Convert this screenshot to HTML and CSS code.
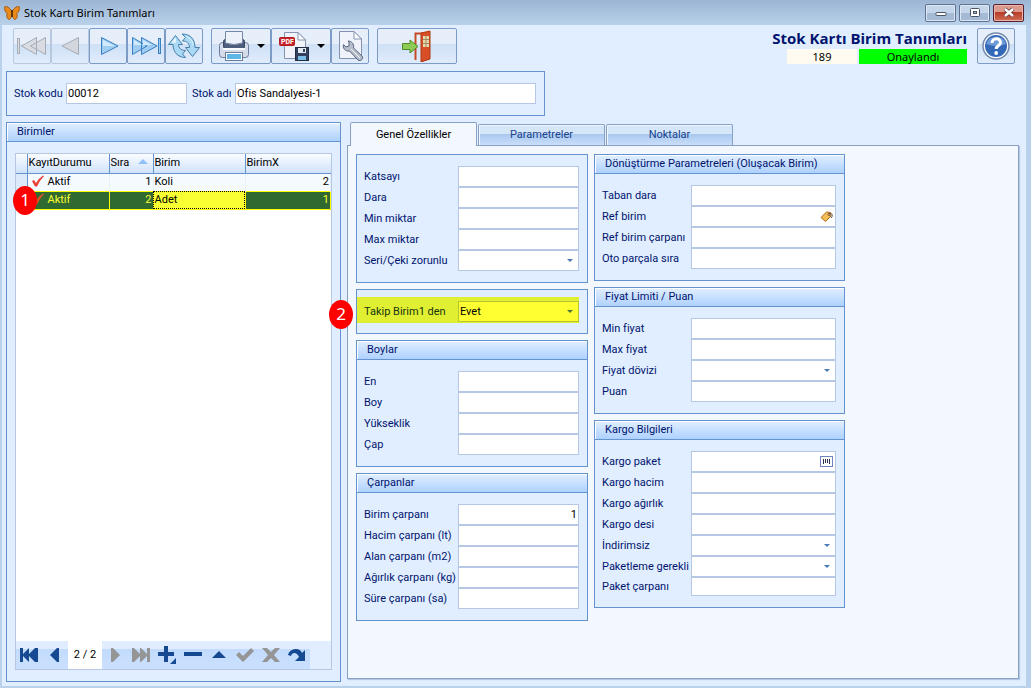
FILE: index.html
```html
<!DOCTYPE html>
<html lang="tr">
  <head>
    <meta charset="UTF-8" />
    <meta name="viewport" content="width=device-width, initial-scale=1.0" />
    <title>Stok Kartı Birim Tanımları</title>
    <link rel="stylesheet" href="styles.css">
  </head>
  <body>
    <header class="titlebar">
      <svg class="app-icon" width="16" height="16" viewBox="0 0 16 16">
        <path d="M8 7 C6 2 2 1 0.5 2 C0.5 5 1.5 8 3.5 8.5 C2 10 3 14 5 14.5 C7 14 7.5 11 8 9 C8.500 11 9 14 11 14.500 C13 14 14 10 12.500 8.500 C14.500 8 15.500 5 15.500 2 C14 1 10 2 8 7Z" fill="#e98a1a" stroke="#a8590f" />
        <path d="M2 3 L7 8 M14 3 L9 8 M5 13 L7 9 M11 13 L9 9" stroke="#e98a1a" stroke-width="2" />
        <path d="M8 5 V12" stroke="#3a1c08" stroke-width="1.500" />
      </svg>
      <span class="titlebar-text">Stok Kartı Birim Tanımları</span>
      <div class="window-buttons">
        <button class="window-btn" aria-label="Simge durumuna küçült">
          <svg width="12" height="12" viewBox="0 0 12 12"><rect x="1" y="5.500" width="10" height="3" rx="0.500" fill="#fff" stroke="#4a5565" /></svg>
        </button>
        <button class="window-btn" aria-label="Ekranı kapla">
          <svg width="12" height="12" viewBox="0 0 12 12"><rect x="1.500" y="1.500" width="9" height="8" rx="1" fill="#fff" stroke="#4a5565" /><rect x="4.500" y="4.500" width="3" height="2" fill="#a9bdd5" stroke="#4a5565" /></svg>
        </button>
        <button class="window-btn window-close" aria-label="Kapat">
          <svg width="12" height="12" viewBox="0 0 12 12"><path d="M2 2 L10 9 M10 2 L2 9" stroke="#5a3038" stroke-width="4" /><path d="M2 2 L10 9 M10 2 L2 9" stroke="#fff" stroke-width="2.500" /></svg>
        </button>
      </div>
    </header>

    <div class="content">
      <div class="toolbar">
        <div class="toolbar-group">
          <button class="tool-btn" disabled aria-label="İlk kayıt">
            <svg width="32" height="24" viewBox="0 0 32 24" fill="#d9dce2" stroke="#a7abb3">
              <rect x="1.500" y="4.500" width="2" height="15" /><path d="M20.500 3.500 V20.500 L5.500 12Z M29.500 3.500 V20.500 L14.500 12Z" />
            </svg>
          </button>
          <button class="tool-btn" disabled aria-label="Önceki kayıt">
            <svg width="32" height="24" viewBox="0 0 32 24" fill="#d3d6dc" stroke="#a7abb3"><path d="M24.500 3.500 V20.500 L8 12Z" /></svg>
          </button>
          <button class="tool-btn" aria-label="Sonraki kayıt">
            <svg width="32" height="24" viewBox="0 0 32 24" fill="#9fcdf2" stroke="#3b7fc0"><path d="M9.500 3.500 V20.500 L26 12Z" /><path d="M11 6 V12 H23Z" fill="#d2ebfc" stroke="none" /></svg>
          </button>
          <button class="tool-btn" aria-label="Son kayıt">
            <svg width="32" height="24" viewBox="0 0 32 24" fill="#9fcdf2" stroke="#3b7fc0">
              <path d="M2.500 3.500 V20.500 L17 12Z M11.500 3.500 V20.500 L27 12Z" /><path d="M4 6 V11 H12Z M13 6 V11 H22Z" fill="#d2ebfc" stroke="none" /><rect x="28.500" y="4.500" width="2" height="15" />
            </svg>
          </button>
          <button class="tool-btn" aria-label="Yenile">
            <svg width="34" height="28" viewBox="0 0 34 28" fill="#a9d9f5" stroke="#477fa9">
              <path d="M6 12.500 H1.500 L8.500 3.500 L15.500 12.500 H11.500 C11.500 16 14 18.500 18.500 18.500 L15.500 22 L18.500 25.500 C10 25.500 6 19 6 12.500Z" />
              <path d="M28 15.500 H32.500 L25.500 24.500 L18.500 15.500 H22.500 C22.500 11.500 20 9 15.500 9 L18.500 5.500 L15 2 C24 2 28 8 28 15.500Z" />
              <path d="M8.500 6 L5 10.500 H8.500Z" fill="#e2f4fd" stroke="#e2f4fd" />
              <path d="M19 4.500 C23 6 26 9 26 13" stroke="#e2f4fd" />
            </svg>
          </button>
        </div>
        <div class="toolbar-group">
          <button class="tool-btn tool-btn-menu" aria-label="Yazdır">
            <svg width="32" height="32" viewBox="0 0 32 32">
              <rect x="1.500" y="12.500" width="29" height="15" rx="3" fill="#d4dcea" stroke="#6d7c9b" />
              <rect x="5.500" y="9.500" width="21" height="9" rx="2" fill="#4d5d7d" stroke="#34425f" />
              <path d="M7.500 1.500 H24.500 V13 Q16 16 7.500 13Z" fill="#edf1fa" stroke="#7787a7" />
              <path d="M5 19 H27" stroke="#f8faff" stroke-width="2" />
              <rect x="7.500" y="22.500" width="17" height="8" fill="#fff" stroke="#6d7c9b" />
              <rect x="9" y="24" width="14" height="5" fill="#5fb5e6" />
            </svg>
            <span class="caret"></span>
          </button>
          <button class="tool-btn tool-btn-menu" aria-label="PDF olarak kaydet">
            <svg width="32" height="32" viewBox="0 0 32 32">
              <path d="M6.500 2.500 H20 L27.500 10 V28.500 H6.500Z" fill="#f0f3fa" stroke="#8492af" />
              <path d="M20 2.500 V10 H27.500Z" fill="#fff" stroke="#8492af" />
              <rect x="1.500" y="7.500" width="15" height="8" rx="1" fill="#c92329" stroke="#b01c22" />
              <text x="3" y="14" class="pdf-text">PDF</text>
              <rect x="17.500" y="17.500" width="13" height="13" fill="#33415e" stroke="#222d45" />
              <rect x="20" y="18" width="8" height="5" fill="#e4e9f2" /><rect x="25" y="19" width="2" height="3" fill="#33415e" /><rect x="20" y="26" width="8" height="4" fill="#79bde6" />
            </svg>
            <span class="caret"></span>
          </button>
          <button class="tool-btn" aria-label="Ayarlar">
            <svg width="32" height="32" viewBox="0 0 32 32">
              <path d="M5.500 1.500 H20 L27.500 9 V28.500 H5.500Z" fill="#f0f3fa" stroke="#8492af" />
              <path d="M20 1.500 V9 H27.500Z" fill="#fff" stroke="#8492af" />
              <path d="M15 12 L15 16 L12 17 L9.500 14.500 C8.500 18 11 21.500 15.500 21 L24 30 C26.500 32 30 28.500 28 26 L19.500 18 C20.500 14 17.500 11 14 11Z" fill="#b9bfca" stroke="#56657f" />
              <path d="M17 19 L26 28" stroke="#edf0f5" />
            </svg>
          </button>
        </div>
        <div class="toolbar-group">
          <button class="tool-btn tool-btn-exit" aria-label="Çıkış">
            <svg width="32" height="32" viewBox="0 0 32 32">
              <path d="M14.500 30 V3.500 H28" stroke="#c74a26" stroke-width="2" />
              <path d="M20 3 L29 1 V29 L20 32Z" fill="#d84f27" stroke="#b03613" />
              <rect x="22" y="6" width="6" height="11" fill="#e9d9a8" /><path d="M25 6 V17 M22 9.500 H28 M22 13.500 H28" stroke="#9a8b66" />
              <path d="M1.500 13.500 H9 V10 L17 16.500 L9 23 V19.500 H1.500Z" fill="#8dcc54" stroke="#4e8a27" />
            </svg>
          </button>
        </div>
        <div class="form-status">
          <h1>Stok Kartı Birim Tanımları</h1>
          <div class="status-row">
            <span class="status-id">189</span>
            <span class="status-state">Onaylandı</span>
          </div>
        </div>
        <button class="tool-btn" aria-label="Yardım">
          <svg width="30" height="30" viewBox="0 0 30 30">
            <circle cx="15" cy="15" r="13" fill="#fff" stroke="#7288ab" stroke-width="1.500" />
            <circle cx="15" cy="15" r="11" fill="#3468b8" />
            <path d="M5 13 A10.500 10.500 0 0 1 25 13 Q15 17 5 13Z" fill="#6f98d6" />
            <path d="M11 12 C11 6.500 19.500 6.500 19.500 11.500 C19.500 14.500 15.200 14.500 15.200 18" stroke="#fff" stroke-width="3" />
            <circle cx="15.200" cy="22" r="1.900" fill="#fff" />
          </svg>
        </button>
      </div>

      <div class="stock-panel">
        <label for="stok-kodu">Stok kodu</label>
        <input class="stock-code" id="stok-kodu" type="text" value="00012">
        <label for="stok-adi">Stok adı</label>
        <input class="stock-name" id="stok-adi" type="text" value="Ofis Sandalyesi-1">
      </div>

      <main class="main">
        <section class="group units">
          <h2>Birimler</h2>
          <div class="grid">
            <table>
              <colgroup>
                <col class="col-mark"><col class="col-state"><col class="col-order"><col class="col-unit"><col>
              </colgroup>
              <thead>
                <tr>
                  <th></th>
                  <th>KayıtDurumu</th>
                  <th>Sıra <span class="sort-arrow"></span></th>
                  <th>Birim</th>
                  <th>BirimX</th>
                </tr>
              </thead>
              <tbody>
                <tr>
                  <td class="mark"></td>
                  <td class="state"><svg width="14" height="12" viewBox="0 0 14 12"><path d="M1 6 L3 5 L5 8 Q8 3 12 0.500 L13 1 Q9 5 6 11.500 H4Z" fill="#e8403a" /></svg>Aktif</td>
                  <td class="num">1</td>
                  <td>Koli</td>
                  <td class="num">2</td>
                </tr>
                <tr class="selected">
                  <td class="mark"></td>
                  <td class="state"><svg width="14" height="12" viewBox="0 0 14 12"><path d="M1 6 L3 5 L5 8 Q8 3 12 0.500 L13 1 Q9 5 6 11.500 H4Z" fill="#e8502a" /></svg>Aktif</td>
                  <td class="num">2</td>
                  <td class="focused">Adet</td>
                  <td class="num">1</td>
                </tr>
              </tbody>
            </table>
            <div class="navigator">
              <button aria-label="İlk"><svg width="20" height="16" viewBox="0 0 20 16"><path d="M1 1 H4 V7 L10 1 V7 L16 1 H19 V15 H16 L10 9 V15 L4 9 V15 H1Z" /></svg></button>
              <button aria-label="Önceki"><svg width="20" height="16" viewBox="0 0 20 16"><path d="M14 1 V15 H12 L5 8 L12 1Z" /></svg></button>
              <span class="nav-count">2 / 2</span>
              <button disabled aria-label="Sonraki"><svg width="20" height="16" viewBox="0 0 20 16"><path d="M6 1 V15 H8 L15 8 L8 1Z" /></svg></button>
              <button disabled aria-label="Son"><svg width="20" height="16" viewBox="0 0 20 16"><path d="M1 1 H3 L9 7 V1 H10 L16 7 V1 H19 V15 H16 V9 L10 15 H9 V9 L3 15 H1Z" /></svg></button>
              <button aria-label="Ekle"><svg width="20" height="20" viewBox="0 0 20 20"><path d="M7 1 H11 V7 H17 V11 H11 V17 H7 V11 H1 V7 H7Z M19 13 V19 H13Z" /></svg></button>
              <button aria-label="Sil"><svg width="20" height="16" viewBox="0 0 20 16"><path d="M1 5 H19 V9 H1Z" /></svg></button>
              <button aria-label="Düzenle"><svg width="20" height="16" viewBox="0 0 20 16"><path d="M3 11 L10 4 L17 11Z" /></svg></button>
              <button disabled aria-label="Kaydet"><svg width="20" height="16" viewBox="0 0 20 16"><path d="M1 8 L4 5 L8 9 L16 1 L19 4 L8 15Z" /></svg></button>
              <button disabled aria-label="Vazgeç"><svg width="20" height="16" viewBox="0 0 20 16"><path d="M1 1 H6 L10 5 L14 1 H19 L13 8 L19 15 H14 L10 11 L6 15 H1 L7 8Z" /></svg></button>
              <button aria-label="Yenile"><svg width="20" height="16" viewBox="0 0 20 16"><path d="M1 8 C3 1 13 0 15 6 L18 3 V14 H8 L12 10 C10 5 5 5 4 9Z" /></svg></button>
            </div>
            <span class="callout callout-row">1</span>
          </div>
        </section>

        <div class="tabs">
          <div class="tab-list" role="tablist">
            <button class="tab active" role="tab" aria-selected="true">Genel Özellikler</button>
            <button class="tab" role="tab">Parametreler</button>
            <button class="tab" role="tab">Noktalar</button>
          </div>
          <div class="tab-page">
            <div class="column">
              <section class="group">
                <div class="fields">
                  <div class="field"><label for="katsayi">Katsayı</label><input id="katsayi" type="text"></div>
                  <div class="field"><label for="dara">Dara</label><input id="dara" type="text"></div>
                  <div class="field"><label for="min-miktar">Min miktar</label><input id="min-miktar" type="text"></div>
                  <div class="field"><label for="max-miktar">Max miktar</label><input id="max-miktar" type="text"></div>
                  <div class="field drop"><label for="seri">Seri/Çeki zorunlu</label><select id="seri"><option></option><option>Evet</option></select></div>
                </div>
              </section>
              <section class="group">
                <div class="fields fields-marked">
                  <div class="field drop marked"><label for="takip">Takip Birim1 den</label><select id="takip"><option>Evet</option></select></div>
                </div>
                <span class="callout callout-field">2</span>
              </section>
              <section class="group">
                <h2>Boylar</h2>
                <div class="fields">
                  <div class="field"><label for="en">En</label><input id="en" type="text"></div>
                  <div class="field"><label for="boy">Boy</label><input id="boy" type="text"></div>
                  <div class="field"><label for="yukseklik">Yükseklik</label><input id="yukseklik" type="text"></div>
                  <div class="field"><label for="cap">Çap</label><input id="cap" type="text"></div>
                </div>
              </section>
              <section class="group">
                <h2>Çarpanlar</h2>
                <div class="fields">
                  <div class="field"><label for="birim-carpani">Birim çarpanı</label><input class="num" id="birim-carpani" type="text" value="1"></div>
                  <div class="field"><label for="hacim-carpani">Hacim çarpanı (lt)</label><input id="hacim-carpani" type="text"></div>
                  <div class="field"><label for="alan-carpani">Alan çarpanı (m2)</label><input id="alan-carpani" type="text"></div>
                  <div class="field"><label for="agirlik-carpani">Ağırlık çarpanı (kg)</label><input id="agirlik-carpani" type="text"></div>
                  <div class="field"><label for="sure-carpani">Süre çarpanı (sa)</label><input id="sure-carpani" type="text"></div>
                </div>
              </section>
            </div>
            <div class="column column-wide">
              <section class="group">
                <h2>Dönüştürme Parametreleri (Oluşacak Birim)</h2>
                <div class="fields">
                  <div class="field"><label for="taban-dara">Taban dara</label><input id="taban-dara" type="text"></div>
                  <div class="field"><label for="ref-birim">Ref birim</label><input id="ref-birim" type="text">
                    <button class="field-btn" aria-label="Birim seç">
                      <svg width="13" height="13" viewBox="0 0 13 13"><path d="M1 7.500 L6.500 2 L10.500 2.500 L11 6 L5.500 11.500Z" fill="#f5bd55" stroke="#b06a1c" /><circle cx="9" cy="4.500" r="1" fill="#fff" stroke="#704314" /><path d="M9 4 C12 2 13.500 6 11 8" stroke="#5b5560" /></svg>
                    </button>
                  </div>
                  <div class="field"><label for="ref-carpan">Ref birim çarpanı</label><input id="ref-carpan" type="text"></div>
                  <div class="field"><label for="oto-parcala">Oto parçala sıra</label><input id="oto-parcala" type="text"></div>
                </div>
              </section>
              <section class="group">
                <h2>Fiyat Limiti / Puan</h2>
                <div class="fields">
                  <div class="field"><label for="min-fiyat">Min fiyat</label><input id="min-fiyat" type="text"></div>
                  <div class="field"><label for="max-fiyat">Max fiyat</label><input id="max-fiyat" type="text"></div>
                  <div class="field drop"><label for="doviz">Fiyat dövizi</label><select id="doviz"><option></option><option>TL</option></select></div>
                  <div class="field"><label for="puan">Puan</label><input id="puan" type="text"></div>
                </div>
              </section>
              <section class="group">
                <h2>Kargo Bilgileri</h2>
                <div class="fields">
                  <div class="field"><label for="kargo-paket">Kargo paket</label><input id="kargo-paket" type="text">
                    <button class="field-btn" aria-label="Barkod">
                      <svg width="13" height="11" viewBox="0 0 13 11"><rect x="0.500" y="0.500" width="12" height="10" fill="#fff" stroke="#6f83bd" /><path d="M3.500 3 V8 M5.500 3 V7 M7.500 3 V7 M9.500 3 V8" stroke="#2c3350" /></svg>
                    </button>
                  </div>
                  <div class="field"><label for="kargo-hacim">Kargo hacim</label><input id="kargo-hacim" type="text"></div>
                  <div class="field"><label for="kargo-agirlik">Kargo ağırlık</label><input id="kargo-agirlik" type="text"></div>
                  <div class="field"><label for="kargo-desi">Kargo desi</label><input id="kargo-desi" type="text"></div>
                  <div class="field drop"><label for="indirimsiz">İndirimsiz</label><select id="indirimsiz"><option></option><option>Evet</option></select></div>
                  <div class="field drop"><label for="paketleme">Paketleme gerekli</label><select id="paketleme"><option></option><option>Evet</option></select></div>
                  <div class="field field-short"><label for="paket-carpani">Paket çarpanı</label><input id="paket-carpani" type="text"></div>
                </div>
              </section>
            </div>
          </div>
        </div>
      </main>
    </div>
  </body>
</html>
```
FILE: styles.css
```css
* {
  margin: 0;
  padding: 0;
  box-sizing: border-box;
}

body {
  min-height: 100vh;
  display: flex;
  flex-direction: column;
  padding: 0 5px 2px 2px;
  background-color: #b9d1ea;
  color: #00146e;
  font-family: Roboto, sans-serif;
  font-size: 11px;
  line-height: 14px;
  fill: none;
}

button,
input,
select {
  font: inherit;
}

svg {
  display: block;
}

/* Title bar */
.titlebar {
  height: 25px;
  margin: 0 -5px 0 -2px;
  padding: 0 7px 0 4px;
  display: flex;
  align-items: center;
  gap: 4px;
  background: linear-gradient(#9cb5d3, #b9d1ea);
  color: #000;
  font-family: "Noto Sans", sans-serif;
}

.titlebar-text {
  flex: 1;
}

.window-buttons {
  display: flex;
  align-self: flex-start;
  gap: 3px;
  padding-top: 4px;
}

.window-btn {
  width: 31px;
  height: 18px;
  display: flex;
  align-items: center;
  justify-content: center;
  border: 1px solid #5f7391;
  border-radius: 2px;
  background: linear-gradient(#c5d6ea 50%, #a4bad5 50%);
  box-shadow: inset 0 0 0 1px #dce8f5;
}

.window-close {
  border-color: #57202a;
  background: linear-gradient(#dc9a8f 45%, #b93a26 45%, #cf7057);
  box-shadow: inset 0 0 0 1px #e9b5ac;
}

.content {
  flex: 1;
  display: flex;
  flex-direction: column;
  padding: 3px 7px 4px 4px;
  background-color: #e1eeff;
}

/* Toolbar */
.toolbar {
  display: flex;
  gap: 8px;
  padding: 0 4px 0 7px;
}

.toolbar-group {
  display: flex;
}

.tool-btn {
  width: 38px;
  height: 36px;
  display: flex;
  align-items: center;
  justify-content: center;
  border: 1px solid #7c9bc7;
  border-radius: 2px;
  background: linear-gradient(#e6eefa 45%, #cfe0f6 45%, #dfecfc);
}

.tool-btn:disabled {
  border-color: #b7c8df;
}

.tool-btn-menu {
  width: 60px;
  gap: 7px;
}

.tool-btn-exit {
  width: 80px;
}

.caret {
  border: 4px solid transparent;
  border-top-color: #000;
  border-bottom: 0;
}

.pdf-text {
  fill: #fff;
  font-size: 7px;
  font-weight: bold;
}

.form-status {
  margin-left: auto;
  margin-right: 2px;
  color: #000;
  font-family: "Noto Sans", sans-serif;
  text-align: center;
}

.form-status h1 {
  color: #00146e;
  font-family: "Open Sans", sans-serif;
  font-size: 15px;
  line-height: 21px;
  text-align: right;
}

.status-row {
  display: flex;
  justify-content: flex-end;
  gap: 2px;
  line-height: 15px;
}

.status-id {
  width: 70px;
  background-color: #fffbf0;
}

.status-state {
  width: 108px;
  background-color: #00ff00;
}

/* Inputs */
input,
select {
  height: 21px;
  padding: 0 1px;
  border: 1px solid #b5c7e3;
  border-radius: 0;
  background-color: #fff;
  color: #000;
}

select {
  appearance: none;
}

.num {
  text-align: right;
}

.stock-panel {
  width: 539px;
  height: 45px;
  margin-top: 7px;
  padding: 0 8px 0 7px;
  display: flex;
  align-items: center;
  border: 1px solid #6593cf;
}

.stock-panel label {
  width: 52px;
}

.stock-panel .stock-code {
  width: 121px;
  margin-right: 5px;
}

.stock-panel .stock-name {
  flex: 1;
}

.stock-panel .stock-code + label {
  width: 43px;
}

/* Group boxes */
.main {
  flex: 1;
  display: flex;
  gap: 6px;
  margin-top: 6px;
}

.group {
  position: relative;
  border: 1px solid #6593cf;
  background-color: #e1eeff;
}

.group h2 {
  height: 19px;
  padding-left: 10px;
  border-bottom: 1px solid #6593cf;
  background: linear-gradient(#e2efff, #aed1ff);
  box-shadow: inset 1px 1px 0 #fff;
  font-size: 11px;
  font-weight: normal;
  line-height: 18px;
}

/* Unit list */
.units {
  width: 335px;
  display: flex;
  flex-direction: column;
}

.grid {
  position: relative;
  flex: 1;
  display: flex;
  flex-direction: column;
  margin: 11px 8px;
  border: 1px solid #b5c7e3;
  background-color: #fff;
  color: #000;
}

table {
  width: 100%;
  table-layout: fixed;
  border-collapse: collapse;
}

.col-mark {
  width: 11px;
}

.col-state {
  width: 82px;
}

.col-order {
  width: 44px;
}

.col-unit {
  width: 92px;
}

th,
td {
  height: 18px;
  padding: 0 1px;
  text-align: left;
  white-space: nowrap;
}

th {
  height: 19px;
  border-bottom: 1px solid #6593cf;
  border-right: 1px solid #6593cf;
  background: linear-gradient(#fafcff, #cfe2fb);
  font-weight: normal;
}

th:last-child {
  border-right: 0;
}

td {
  border-right: 1px solid #e4f0fc;
  background-color: #f5faff;
}

td.num {
  text-align: right;
}

td.mark {
  border-right-color: #6593cf;
  background-color: #dbe9fb;
}

.state svg {
  display: inline-block;
  margin: 0 3px 0 2px;
  vertical-align: -2px;
}

.sort-arrow {
  display: inline-block;
  margin-left: 6px;
  vertical-align: 2px;
  border: 5px solid transparent;
  border-top: 0;
  border-bottom-color: #92c0f8;
}

.selected td {
  border: 1px solid #ffff00;
  border-left: 0;
  background-color: #316a31;
  color: #ffff32;
}

.selected td.focused {
  outline: 1px dotted #000;
  outline-offset: -1px;
  background-color: #f8ff32;
  color: #000;
}

.navigator {
  height: 28px;
  margin-top: auto;
  display: flex;
  background-color: #e1eeff;
}

.navigator button {
  width: 26px;
  display: flex;
  align-items: center;
  justify-content: center;
  border: 0;
  background: linear-gradient(#e0edff 30%, #c2dbfd 30%, #cbe0fd);
}

.navigator svg {
  fill: #154a93;
}

.navigator button:disabled svg {
  fill: #959595;
}

.nav-count {
  width: 34px;
  background-color: #fff;
  line-height: 28px;
  text-align: center;
}

/* Tabs */
.tabs {
  flex: 1;
  display: flex;
  flex-direction: column;
}

.tab-list {
  display: flex;
  align-items: flex-end;
  gap: 1px;
  padding-left: 3px;
}

.tab {
  width: 127px;
  height: 21px;
  border: 1px solid #8ba0c5;
  border-bottom: 0;
  border-radius: 2px 2px 0 0;
  background: linear-gradient(#d6e6f9 45%, #a9c8ef 45%, #c9defa);
  box-shadow: inset 1px 1px 0 #eef6ff;
  color: #15428b;
}

.tab.active {
  position: relative;
  height: 24px;
  margin-bottom: -1px;
  background: #f3f8ff;
  color: #000;
}

.tab-page {
  flex: 1;
  display: flex;
  gap: 6px;
  margin-bottom: 3px;
  padding: 8px;
  border: 1px solid #8ba0c5;
  background-color: #f3f8ff;
  box-shadow: 1px 1px 1px #b4c8e6;
}

.column {
  width: 232px;
  display: flex;
  flex-direction: column;
  gap: 6px;
}

.column-wide {
  width: 251px;
}

.fields {
  padding: 11px 8px 11px 7px;
}

.field {
  position: relative;
  display: flex;
  align-items: center;
}

.field label {
  width: 94px;
  white-space: nowrap;
}

.field input,
.field select {
  flex: 1;
  min-width: 0;
}

.column-wide .field label {
  width: 89px;
}

.field-short input {
  height: 19px;
}

.field-btn {
  position: absolute;
  right: 3px;
  border: 0;
  background: none;
}

.drop::after {
  content: "";
  position: absolute;
  right: 6px;
  border: 3px solid transparent;
  border-top-color: #4a7ab5;
  border-bottom: 0;
  pointer-events: none;
}

.fields-marked {
  padding: 7px 8px 10px 0;
}

.marked {
  padding: 4px 0 1px 7px;
  background-color: #e1ef32;
  color: #15330f;
}

.marked select {
  border-color: #b5c72f;
  background-color: #ffff32;
}

.marked::after {
  border-top-color: #4a7a32;
}

/* Numbered callouts */
.callout {
  position: absolute;
  width: 24px;
  height: 29px;
  border-radius: 50%;
  background-color: #ff0000;
  color: #fff;
  font-family: "Noto Sans", sans-serif;
  font-size: 17px;
  line-height: 28px;
  text-align: center;
}

.callout-row {
  top: 32px;
  left: -3px;
}

.callout-field {
  top: 10px;
  left: -28px;
}
```
